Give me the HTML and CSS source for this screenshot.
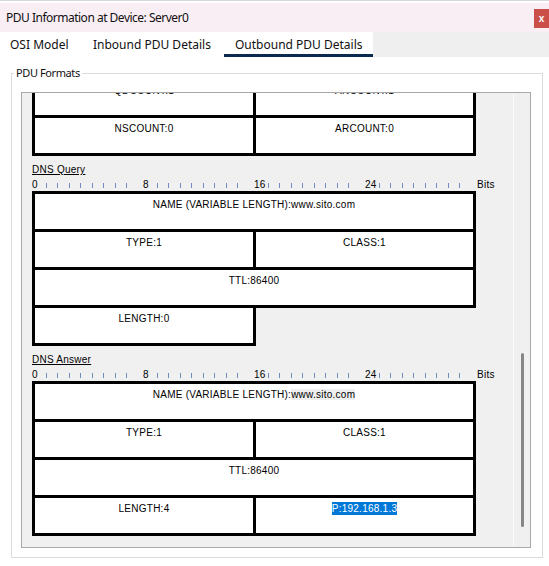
FILE: index.html
```html
<!DOCTYPE html>
<html lang="en">
<head>
<meta charset="utf-8">
<title>PDU Information at Device: Server0</title>
<link rel="stylesheet" href="styles.css">
</head>
<body>
  <div class="topline"></div>
  <header class="titlebar">
    <span class="title">PDU Information at Device: Server0</span>
    <button class="close" type="button">x</button>
  </header>
  <nav class="tabs">
    <span class="tab tab-osi">OSI Model</span>
    <span class="tab tab-in">Inbound PDU Details</span>
    <span class="tab tab-out">Outbound PDU Details</span>
  </nav>
  <main class="page">
    <fieldset class="group">
      <legend>PDU Formats</legend>
      <div class="panel">
        <div class="viewport">
          <div class="content">
            <!-- DNS header (tail, scrolled partly out of view) -->
            <div class="pdu">
              <div class="row">
                <div class="cell half-l">QDCOUNT:1</div>
                <div class="cell half-r">ANCOUNT:1</div>
              </div>
              <div class="row">
                <div class="cell half-l">NSCOUNT:0</div>
                <div class="cell half-r">ARCOUNT:0</div>
              </div>
            </div>

            <!-- DNS Query -->
            <div class="section-title">DNS Query</div>
            <div class="ruler">
              <div class="seg"><span class="num">0</span><span class="ticks"><i></i><i></i><i></i><i></i><i></i><i></i><i></i><i></i></span></div>
              <div class="seg"><span class="num">8</span><span class="ticks"><i></i><i></i><i></i><i></i><i></i><i></i><i></i><i></i></span></div>
              <div class="seg"><span class="num">16</span><span class="ticks"><i></i><i></i><i></i><i></i><i></i><i></i><i></i><i></i></span></div>
              <div class="seg"><span class="num">24</span><span class="ticks"><i></i><i></i><i></i><i></i><i></i><i></i><i></i><i></i></span></div>
              <span class="bits">Bits</span>
            </div>
            <div class="pdu">
              <div class="row"><div class="cell full">NAME (VARIABLE LENGTH):www.sito.com</div></div>
              <div class="row">
                <div class="cell half-l">TYPE:1</div>
                <div class="cell half-r">CLASS:1</div>
              </div>
              <div class="row"><div class="cell full">TTL:86400</div></div>
              <div class="row"><div class="cell half-l">LENGTH:0</div></div>
            </div>

            <!-- DNS Answer -->
            <div class="section-title">DNS Answer</div>
            <div class="ruler">
              <div class="seg"><span class="num">0</span><span class="ticks"><i></i><i></i><i></i><i></i><i></i><i></i><i></i><i></i></span></div>
              <div class="seg"><span class="num">8</span><span class="ticks"><i></i><i></i><i></i><i></i><i></i><i></i><i></i><i></i></span></div>
              <div class="seg"><span class="num">16</span><span class="ticks"><i></i><i></i><i></i><i></i><i></i><i></i><i></i><i></i></span></div>
              <div class="seg"><span class="num">24</span><span class="ticks"><i></i><i></i><i></i><i></i><i></i><i></i><i></i><i></i></span></div>
              <span class="bits">Bits</span>
            </div>
            <div class="pdu">
              <div class="row"><div class="cell full">NAME (VARIABLE LENGTH):<span class="soft">www.sito.com</span></div></div>
              <div class="row">
                <div class="cell half-l">TYPE:1</div>
                <div class="cell half-r">CLASS:1</div>
              </div>
              <div class="row"><div class="cell full">TTL:86400</div></div>
              <div class="row">
                <div class="cell half-l">LENGTH:4</div>
                <div class="cell half-r"><span class="sel">P:192.168.1.3</span></div>
              </div>
            </div>
          </div>
        </div>
        <div class="scrollbar"><div class="thumb"></div></div>
      </div>
    </fieldset>
  </main>
</body>
</html>
```
FILE: styles.css
```css
* {
  box-sizing: border-box;
}

html,
body {
  margin: 0;
}

body {
  width: 549px;
  height: 566px;
  overflow: hidden;
  background: #ffffff;
  font-family: "Noto Sans", "Liberation Sans", sans-serif;
  color: #000000;
}

/* window chrome */
.topline {
  height: 3px;
  border-top: 1px solid #d8d8d8;
}

.titlebar {
  display: flex;
  align-items: center;
  height: 29px;
  background: #faeef5;
}

.title {
  padding-left: 6px;
  font-size: 12px;
  letter-spacing: -0.5px;
  color: #111111;
}

.close {
  margin-left: auto;
  align-self: flex-start;
  margin-top: 6px;
  width: 15px;
  height: 19px;
  padding: 0;
  border: 0;
  background: #c94f48;
  color: #ffffff;
  font: bold 10px "Liberation Sans", sans-serif;
  display: flex;
  align-items: center;
  justify-content: center;
}

/* tab strip */
.tabs {
  display: flex;
  height: 25px;
  background: #efefef;
}

.tab {
  background: #ffffff;
  font-size: 12px;
  line-height: 17px;
  padding-top: 4px;
  padding-left: 11px;
  color: #111111;
  white-space: nowrap;
}

.tab-osi {
  width: 82px;
  padding-left: 10px;
}

.tab-in {
  width: 142px;
}

.tab-out {
  width: 149px;
  border-bottom: 3px solid #0b2a4f;
}

/* group box */
.page {
  padding: 9px 6px 0 11px;
}

.group {
  margin: 0;
  min-width: 0;
  border: 1px solid #dcdcdc;
  padding: 12px 11px 9px 9px;
}

.group legend {
  margin-left: -7px;
  padding: 0 2px;
  font-size: 11px;
  line-height: 14px;
  letter-spacing: -0.4px;
  color: #111111;
}

.panel {
  display: flex;
  height: 456px;
  border: 1px solid #a8a8a8;
  background: #f0f0f0;
}

.viewport {
  flex: 1;
  overflow: hidden;
}

.content {
  margin-top: -16px;
  padding-left: 10px;
  font: 10px/12px "Liberation Sans", Arial, sans-serif;
  letter-spacing: 0.25px;
}

.scrollbar {
  width: 17px;
  border-left: 1px solid #fbfbfb;
  padding-top: 260px;
  padding-left: 7px;
}

.thumb {
  width: 3px;
  height: 174px;
  border-radius: 2px;
  background: #868686;
}

/* PDU field tables */
.pdu {
  width: 444px;
}

.row {
  display: flex;
}

.row + .row {
  margin-top: -3px;
}

.cell {
  height: 41px;
  border: 3px solid #000000;
  background: #ffffff;
  text-align: center;
  padding-top: 4px;
  line-height: 13px;
  white-space: nowrap;
}

.half-l {
  width: 224px;
}

.half-r {
  width: 223px;
  margin-left: -3px;
}

.full {
  width: 444px;
}

.soft {
  background: #efefef;
}

.sel {
  background: #0078d7;
  color: #ffffff;
  padding: 1px 0;
}

/* section headings and bit rulers */
.section-title {
  margin-top: 8px;
  text-decoration: underline;
}

.ruler {
  display: flex;
  margin-top: 3px;
  height: 12px;
}

.seg {
  display: flex;
  width: 111px;
  flex: none;
}

.num {
  width: 14px;
  flex: none;
  white-space: nowrap;
}

.ticks {
  display: flex;
  align-items: flex-end;
  gap: 10.43px;
  height: 9px;
}

.ticks i {
  display: block;
  width: 1px;
  height: 5px;
  background: #6f8cc0;
}

.bits {
  margin-left: 1px;
}
```
